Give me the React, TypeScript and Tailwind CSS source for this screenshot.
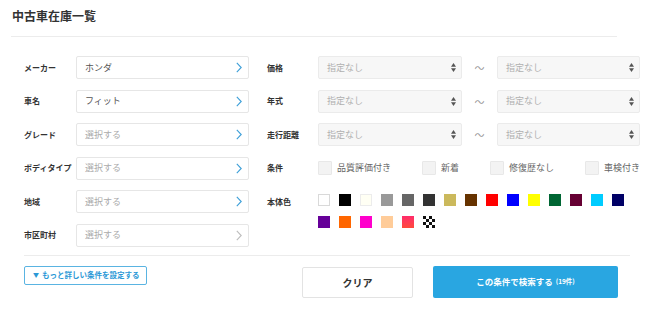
import React from "react";

const leftRows = [
  { label: "メーカー", value: "ホンダ", filled: true },
  { label: "車名", value: "フィット", filled: true },
  { label: "グレード", value: "選択する", filled: false },
  { label: "ボディタイプ", value: "選択する", filled: false },
  { label: "地域", value: "選択する", filled: false },
  { label: "市区町村", value: "選択する", filled: false, disabled: true },
];

const rangeRows = ["価格", "年式", "走行距離"];

const conditions = ["品質評価付き", "新着", "修復歴なし", "車検付き"];

const colors = [
  "bg-white border border-[#d9d9d9]",
  "bg-black",
  "bg-[#fffff4] border border-[#ececec]",
  "bg-[#999999]",
  "bg-[#666666]",
  "bg-[#333333]",
  "bg-[#cbb95c]",
  "bg-[#663300]",
  "bg-[#ff0000]",
  "bg-[#0000ff]",
  "bg-[#ffff00]",
  "bg-[#006633]",
  "bg-[#660033]",
  "bg-[#00ccff]",
  "bg-[#000066]",
  "bg-[#660099]",
  "bg-[#ff6600]",
  "bg-[#ff00cc]",
  "bg-[#ffcc99]",
  "bg-gradient-to-b from-[#ff2a6a] to-[#ff4a3a]",
];

function Chevron({ disabled }: { disabled?: boolean }) {
  return (
    <svg width="6" height="11" viewBox="0 0 6 11" fill="none">
      <path
        d="M0.8 0.8 L5.2 5.5 L0.8 10.2"
        stroke={disabled ? "#bdbdbd" : "#3d9fd8"}
        strokeWidth="1.1"
      />
    </svg>
  );
}

function UpDown() {
  return (
    <svg width="5" height="9" viewBox="0 0 5 9">
      <path d="M0 3.8 L2.5 0 L5 3.8 Z" fill="#555" />
      <path d="M0 5.2 L5 5.2 L2.5 9 Z" fill="#555" />
    </svg>
  );
}

function Checker() {
  const cells = [];
  for (let r = 0; r < 4; r++) {
    for (let c = 0; c < 4; c++) {
      if ((r + c) % 2 === 0) cells.push(<rect key={`${r}-${c}`} x={c * 3} y={r * 3} width="3" height="3" fill="#111" />);
    }
  }
  return (
    <svg width="12" height="12" viewBox="0 0 12 12">
      <rect width="12" height="12" fill="#fff" />
      {cells}
    </svg>
  );
}

function Select() {
  return (
    <div className="flex items-center justify-between w-full h-[23px] bg-[#f7f7f7] border border-[#ebebeb] rounded-[2px] pl-[8px] pr-[5px]">
      <span className="text-[9px] text-[#b0b0b0]">指定なし</span>
      <UpDown />
    </div>
  );
}

export default function App() {
  return (
    <div
      className="w-[655px] h-[314px] bg-white pt-[6px] overflow-hidden"
      style={{ fontFamily: '"Noto Sans CJK JP", "Noto Sans", sans-serif' }}
    >
      <div className="h-[20px] pl-[12px] flex items-center text-[12px] font-bold text-[#333] leading-none">
        中古車在庫一覧
      </div>
      <div className="mt-[10px] ml-[11px] w-[606px] h-px bg-[#ececec]" />

      <div className="mt-[19px] ml-[24px] flex gap-[18px]">
        {/* left column */}
        <div className="w-[225px] flex flex-col gap-[10.5px]">
          {leftRows.map((row) => (
            <div key={row.label} className="flex items-center h-[23px]">
              <div className="w-[52px] text-[8px] font-bold text-[#333] leading-none whitespace-nowrap">
                {row.label}
              </div>
              <div className="flex items-center justify-between w-[173px] h-[23px] border border-[#e6e6e6] rounded-[2px] pl-[8px] pr-[6px]">
                <span className={`text-[9px] ${row.filled ? "text-[#555]" : "text-[#aaa]"}`}>{row.value}</span>
                <Chevron disabled={row.disabled} />
              </div>
            </div>
          ))}
        </div>

        {/* right column */}
        <div className="w-[373px] flex flex-col gap-[10.5px]">
          {rangeRows.map((label) => (
            <div key={label} className="flex items-center h-[23px]">
              <div className="w-[51px] text-[8px] font-bold text-[#333] leading-none whitespace-nowrap">{label}</div>
              <div className="w-[144px]">
                <Select />
              </div>
              <div className="w-[35px] text-center text-[10px] text-[#999]">～</div>
              <div className="w-[143px]">
                <Select />
              </div>
            </div>
          ))}

          <div className="flex items-center h-[23px]">
            <div className="w-[51px] text-[8px] font-bold text-[#333] leading-none">条件</div>
            <div className="flex items-center gap-[31px]">
              {conditions.map((c) => (
                <label key={c} className="flex items-center gap-[5px]">
                  <span className="w-[14px] h-[14px] bg-[#f3f3f3] border border-[#e8e8e8] rounded-[1px]" />
                  <span className="text-[9px] text-[#666] whitespace-nowrap">{c}</span>
                </label>
              ))}
            </div>
          </div>

          <div className="flex items-start">
            <div className="w-[51px] h-[23px] flex items-center text-[8px] font-bold text-[#333] leading-none">本体色</div>
            <div className="w-[322px] pt-[4px] flex flex-wrap gap-x-[9px] gap-y-[10px]">
              {colors.map((c, i) => (
                <span key={i} className={`w-[12px] h-[12px] box-border ${c}`} />
              ))}
              <Checker />
            </div>
          </div>
        </div>
      </div>

      <div className="mt-[8px] ml-[24px] w-[606px] h-px bg-[#ececec]" />

      <div className="mt-[10px] ml-[24px] flex items-start">
        <button className="w-[123px] h-[19px] flex items-center pl-[8px] border border-[#5ab4e2] rounded-[2px] text-[7.5px] font-bold text-[#2b98d6] leading-none whitespace-nowrap">
          <span className="text-[6px] mr-[3px]">▼</span>もっと詳しい条件を設定する
        </button>
        <button className="ml-[155px] mt-px w-[111px] h-[31px] bg-white border border-[#e3e3e3] rounded-[2px] text-[10px] font-bold text-[#333]">
          クリア
        </button>
        <button className="ml-[20px] w-[185px] h-[32px] bg-[#29a6e1] rounded-[2px] text-white font-bold flex items-center justify-center gap-[3px]">
          <span className="text-[8.5px]">この条件で検索する</span>
          <span className="text-[6.5px]">(19件)</span>
        </button>
      </div>
    </div>
  );
}
